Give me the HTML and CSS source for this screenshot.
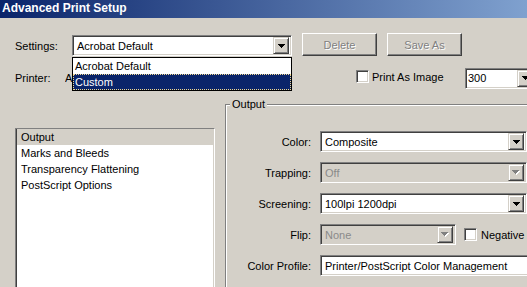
FILE: index.html
```html
<!DOCTYPE html>
<html>
<head>
  <meta charset="UTF-8">
  <link rel="stylesheet" href="styles.css">
</head>
<body>
  <div class="window">
    <div class="titlebar">Advanced Print Setup</div>
    <div class="dialog">
      <div class="row settings-row">
        <span class="label settings-label">Settings:</span>
        <div class="combo-wrap">
          <div class="combo settings-combo">
            <span class="combo-text">Acrobat Default</span>
            <span class="combo-btn"><svg width="7" height="4" shape-rendering="crispEdges"><path d="M0 0h7v1h-1v1h-1v1h-1v1h-1v-1h-1v-1h-1v-1h-1z" fill="#000"/></svg></span>
          </div>
          <ul class="dropdown">
            <li>Acrobat Default</li>
            <li class="active">Custom</li>
          </ul>
        </div>
        <button class="btn" disabled>Delete</button>
        <button class="btn" disabled>Save As</button>
      </div>

      <div class="row printer-row">
        <span class="label printer-label">Printer:</span>
        <span class="printer-name">Acrobat Distiller</span>
        <label class="check print-image"><span class="box"></span>Print As Image</label>
        <div class="combo res-combo">
          <span class="combo-text tight">300</span>
          <span class="combo-btn"><svg width="7" height="4" shape-rendering="crispEdges"><path d="M0 0h7v1h-1v1h-1v1h-1v1h-1v-1h-1v-1h-1v-1h-1z" fill="#000"/></svg></span>
        </div>
      </div>

      <div class="main">
        <ul class="pane-list">
          <li class="current">Output</li>
          <li>Marks and Bleeds</li>
          <li>Transparency Flattening</li>
          <li>PostScript Options</li>
        </ul>

        <div class="group">
          <div class="group-title">Output</div>
          <div class="fields">
            <span class="field-label">Color:</span>
            <div class="combo wide-combo">
              <span class="combo-text">Composite</span>
              <span class="combo-btn"><svg width="7" height="4" shape-rendering="crispEdges"><path d="M0 0h7v1h-1v1h-1v1h-1v1h-1v-1h-1v-1h-1v-1h-1z" fill="#000"/></svg></span>
            </div>

            <span class="field-label">Trapping:</span>
            <div class="combo wide-combo disabled">
              <span class="combo-text">Off</span>
              <span class="combo-btn"><svg width="8" height="5" shape-rendering="crispEdges"><path d="M1 1h7v1h-1v1h-1v1h-1v1h-1v-1h-1v-1h-1v-1h-1z" fill="#fff"/><path d="M0 0h7v1h-1v1h-1v1h-1v1h-1v-1h-1v-1h-1v-1h-1z" fill="#808080"/></svg></span>
            </div>

            <span class="field-label">Screening:</span>
            <div class="combo wide-combo">
              <span class="combo-text">100lpi 1200dpi</span>
              <span class="combo-btn"><svg width="7" height="4" shape-rendering="crispEdges"><path d="M0 0h7v1h-1v1h-1v1h-1v1h-1v-1h-1v-1h-1v-1h-1z" fill="#000"/></svg></span>
            </div>

            <span class="field-label">Flip:</span>
            <div class="flip-row">
              <div class="combo flip-combo disabled">
                <span class="combo-text">None</span>
                <span class="combo-btn"><svg width="8" height="5" shape-rendering="crispEdges"><path d="M1 1h7v1h-1v1h-1v1h-1v1h-1v-1h-1v-1h-1v-1h-1z" fill="#fff"/><path d="M0 0h7v1h-1v1h-1v1h-1v1h-1v-1h-1v-1h-1v-1h-1z" fill="#808080"/></svg></span>
              </div>
              <label class="check negative"><span class="box"></span>Negative</label>
            </div>

            <span class="field-label">Color Profile:</span>
            <div class="combo profile-combo">
              <span class="combo-text">Printer/PostScript Color Management</span>
            </div>
          </div>
        </div>
      </div>
    </div>
  </div>
</body>
</html>
```

FILE: styles.css
```css
* {
  box-sizing: border-box;
}
body {
  margin: 0;
  padding: 0;
  background: #d4d0c8;
  font-family: "Liberation Sans", Arial, sans-serif;
  font-size: 11px;
  color: #000;
}
ul {
  margin: 0;
  padding: 0;
  list-style: none;
}
.window {
  width: 527px;
  height: 287px;
  overflow: hidden;
}
.titlebar {
  height: 18px;
  line-height: 17px;
  padding-left: 2px;
  color: #fff;
  font-weight: bold;
  font-size: 12px;
  background: linear-gradient(to right, #0a246a 0, #a6caf0 700px);
  white-space: nowrap;
}
.dialog {
  width: 560px;
  padding: 0 0 0 15px;
}
.row {
  display: flex;
  align-items: center;
  white-space: nowrap;
}
.row > * {
  flex: none;
}
.settings-row {
  margin-top: 15px;
  height: 23px;
}
.settings-label {
  width: 57px;
  padding-top: 3px;
}
.printer-row {
  margin-top: 11px;
  height: 22px;
}
.printer-label {
  width: 50px;
}
.printer-name {
  width: 291px;
  overflow: hidden;
}

/* combo boxes */
.combo-wrap {
  position: relative;
  align-self: flex-end;
}
.combo {
  display: flex;
  align-items: center;
  height: 21px;
  background: #fff;
  border: 1px solid;
  border-color: #808080 #fff #fff #808080;
  box-shadow: inset 1px 1px 0 #404040, inset -1px -1px 0 #d4d0c8;
  padding: 2px;
  white-space: nowrap;
  overflow: hidden;
}
.combo-text {
  flex: 1;
  padding-left: 2px;
  overflow: hidden;
}
.combo-text.tight {
  padding-left: 0;
}
.combo-btn {
  display: flex;
  align-items: center;
  justify-content: center;
  width: 16px;
  height: 17px;
  flex: none;
  background: #d4d0c8;
  border: 1px solid;
  border-color: #d4d0c8 #404040 #404040 #d4d0c8;
  box-shadow: inset 1px 1px 0 #fff, inset -1px -1px 0 #808080;
}
.combo.disabled {
  background: #d4d0c8;
}
.combo.disabled .combo-text {
  color: #8a8a8a;
}
.settings-combo {
  width: 220px;
}
.dropdown {
  position: absolute;
  left: 0;
  top: calc(100% + 1px);
  width: 220px;
  background: #fff;
  border: 1px solid #000;
  z-index: 2;
}
.dropdown li {
  height: 16px;
  line-height: 16px;
  padding-left: 2px;
}
.dropdown li.active {
  background: #0a246a;
  color: #fff;
  outline: 1px dotted #f0d890;
  outline-offset: -1px;
}
.res-combo {
  width: 71px;
  height: 21px;
}

/* buttons */
.btn {
  width: 75px;
  height: 23px;
  margin-left: 10px;
  padding: 0;
  font: inherit;
  background: #d4d0c8;
  border: 1px solid;
  border-color: #fff #404040 #404040 #fff;
  box-shadow: inset -1px -1px 0 #808080, inset 1px 1px 0 #d4d0c8;
  color: #808080;
  text-shadow: 1px 1px 0 #fff;
}

/* checkboxes */
.check {
  display: flex;
  align-items: center;
  gap: 3px;
}
.box {
  flex: none;
  width: 13px;
  height: 13px;
  background: #fff;
  border: 1px solid;
  border-color: #808080 #fff #fff #808080;
  box-shadow: inset 1px 1px 0 #404040, inset -1px -1px 0 #d4d0c8;
}
.print-image {
  width: 109px;
  margin-bottom: 3px;
}

/* lower part */
.main {
  display: flex;
  align-items: flex-start;
  margin-top: 15px;
}
.main > * {
  flex: none;
}
.pane-list {
  width: 200px;
  height: 170px;
  margin-top: 24px;
  background: #fff;
  border: 1px solid;
  border-color: #808080 #fff #fff #808080;
  box-shadow: inset 1px 0 0 #404040, inset -1px 0 0 #d4d0c8;
  padding: 0 1px 0 1px;
}
.pane-list li {
  height: 16px;
  line-height: 16px;
  padding-left: 4px;
  white-space: nowrap;
}
.pane-list li.current {
  background: #d4d0c8;
}
.group {
  width: 320px;
  height: 190px;
  margin-left: 10px;
  border: 1px solid #808080;
  box-shadow: inset 1px 1px 0 #fff, 1px 1px 0 #fff;
}
.group-title {
  width: fit-content;
  margin: -7px 0 0 4px;
  padding: 0 2px;
  line-height: 13px;
  background: #d4d0c8;
}
.fields {
  display: grid;
  grid-template-columns: 85px auto;
  column-gap: 9px;
  row-gap: 10px;
  margin-top: 20px;
  align-items: center;
}
.field-label {
  text-align: right;
  white-space: nowrap;
}
.wide-combo {
  width: 207px;
}
.flip-row {
  display: flex;
  align-items: center;
}
.flip-combo {
  width: 136px;
  flex: none;
}
.negative {
  margin-left: 8px;
  gap: 4px;
}
.profile-combo {
  width: 240px;
}
```
